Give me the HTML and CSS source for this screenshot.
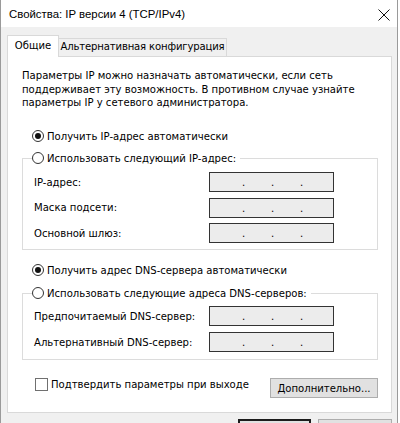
FILE: index.html
```html
<!DOCTYPE html>
<html lang="ru">
<head>
    <meta charset="UTF-8">
    <title>Свойства: IP версии 4 (TCP/IPv4)</title>
    <link rel="stylesheet" href="styles.css">
</head>
<body>
    <div class="window">
        <div class="titlebar">
            <span class="title">Свойства: IP версии 4 (TCP/IPv4)</span>
            <svg class="close" width="12" height="12" viewBox="0 0 12 12">
                <path d="M0.5 0.5 L11.5 11.5 M11.5 0.5 L0.5 11.5" stroke="#111" stroke-width="1" fill="none"/>
            </svg>
        </div>
        <div class="dialog">
            <div class="tabs">
                <div class="tab active">Общие</div>
                <div class="tab">Альтернативная конфигурация</div>
            </div>
            <div class="panel">
                <p class="intro">Параметры IP можно назначать автоматически, если сеть<br>поддерживает эту возможность. В противном случае узнайте<br>параметры IP у сетевого администратора.</p>

                <label class="radio-row first"><span class="radio checked"></span>Получить IP-адрес автоматически</label>

                <fieldset class="group ip-group">
                    <legend><label class="radio-row"><span class="radio"></span>Использовать следующий IP-адрес:</label></legend>
                    <div class="rows">
                        <div class="field-row"><span>IP-адрес:</span><div class="ip"><i>.</i><i>.</i><i>.</i></div></div>
                        <div class="field-row"><span>Маска подсети:</span><div class="ip"><i>.</i><i>.</i><i>.</i></div></div>
                        <div class="field-row"><span>Основной шлюз:</span><div class="ip"><i>.</i><i>.</i><i>.</i></div></div>
                    </div>
                </fieldset>

                <label class="radio-row dns-auto"><span class="radio checked"></span>Получить адрес DNS-сервера автоматически</label>

                <fieldset class="group dns-group">
                    <legend><label class="radio-row"><span class="radio"></span>Использовать следующие адреса DNS-серверов:</label></legend>
                    <div class="rows">
                        <div class="field-row"><span>Предпочитаемый DNS-сервер:</span><div class="ip"><i>.</i><i>.</i><i>.</i></div></div>
                        <div class="field-row"><span>Альтернативный DNS-сервер:</span><div class="ip"><i>.</i><i>.</i><i>.</i></div></div>
                    </div>
                </fieldset>

                <div class="footer-row">
                    <label class="check-row"><span class="checkbox"></span>Подтвердить параметры при выходе</label>
                    <button class="btn advanced">Дополнительно...</button>
                </div>
            </div>
            <!-- OK / Cancel are cut off by the bottom of the shot -->
            <div class="dialog-buttons">
                <button class="btn default" aria-label="OK"></button>
                <button class="btn" aria-label="Отмена"></button>
            </div>
        </div>
    </div>
</body>
</html>
```

FILE: styles.css
```css
body {
    margin: 0;
    background-color: #fff;
    font-family: "DejaVu Sans Condensed", "DejaVu Sans", sans-serif;
    font-size: 11.2px;
    color: #000;
}
.window {
    width: 398px;
    height: 423px;
    box-sizing: border-box;
    border-left: 1px solid #9a9a9a;
    border-right: 1px solid #9a9a9a;
    overflow: hidden;
    background-color: #f0f0f0;
}
.titlebar {
    height: 27px;
    background-color: #fff;
    display: flex;
    align-items: center;
    justify-content: space-between;
    padding: 0 7px 0 8px;
}
.title {
    font-family: "Liberation Sans", Arial, sans-serif;
    font-size: 11.4px;
    margin-top: 1px;
}
.close {
    margin-top: 2px;
}
.tabs {
    display: flex;
    align-items: flex-end;
    height: 21px;
    padding: 8px 0 0 6px;
}
.tab {
    box-sizing: border-box;
    width: 169px;
    height: 18px;
    line-height: 16px;
    text-align: center;
    white-space: nowrap;
    letter-spacing: -0.15px;
    border: 1px solid #d9d9d9;
    border-bottom: none;
    background-color: #f0f0f0;
}
.tab.active {
    width: 52px;
    height: 22px;
    line-height: 19px;
    letter-spacing: 0;
    margin-bottom: -1px;
    margin-right: -1px;
    background-color: #fff;
    position: relative;
    z-index: 1;
}
.panel {
    width: 385px;
    box-sizing: border-box;
    margin-left: 6px;
    border: 1px solid #d9d9d9;
    background-color: #fff;
    padding: 12px 13px 14px 14px;
}
.intro {
    margin: 0;
    line-height: 13.5px;
}
.radio-row {
    display: flex;
    align-items: center;
    height: 16px;
    white-space: nowrap;
}
.radio-row.first {
    margin-top: 18.5px;
    padding-left: 10px;
}
.radio-row.dns-auto {
    margin-top: 12px;
    padding-left: 10px;
}
.radio {
    box-sizing: border-box;
    width: 12px;
    height: 12px;
    margin-right: 3px;
    border: 1px solid #333;
    border-radius: 50%;
    background-color: #fff;
    display: inline-flex;
    align-items: center;
    justify-content: center;
}
.radio.checked::after {
    content: "";
    width: 6px;
    height: 6px;
    border-radius: 50%;
    background-color: #111;
}
.group {
    margin: 0;
    padding: 0;
    border: 1px solid #dcdcdc;
}
.group legend {
    margin-left: 9px;
    padding: 0 4px 0 0;
}
.ip-group {
    margin-top: 6px;
}
.dns-group {
    margin-top: 7px;
}
.rows {
    display: flex;
    flex-direction: column;
    padding-left: 11px;
}
.ip-group .rows {
    gap: 5.5px;
    padding-top: 6px;
    padding-bottom: 6px;
}
.dns-group .rows {
    gap: 6px;
    padding-top: 5px;
    padding-bottom: 7px;
}
.field-row {
    display: grid;
    grid-template-columns: 175px 125px;
    align-items: center;
    height: 20px;
}
.ip {
    box-sizing: border-box;
    height: 20px;
    border: 1px solid #333;
    background-color: #ececec;
    display: flex;
    align-items: flex-end;
    gap: 26px;
    padding: 0 0 3px 32px;
    line-height: 10px;
}
.ip i {
    font-style: normal;
    width: 3px;
}
.footer-row {
    display: flex;
    align-items: flex-start;
    justify-content: space-between;
    margin-top: 18px;
}
.check-row {
    display: flex;
    align-items: center;
    height: 13px;
    padding-left: 13px;
}
.checkbox {
    box-sizing: border-box;
    width: 13px;
    height: 13px;
    border: 1px solid #707070;
    background-color: #fff;
    margin-right: 3px;
}
.btn {
    box-sizing: border-box;
    font-family: inherit;
    font-size: 11.2px;
    border: 1px solid #adadad;
    background-color: #e1e1e1;
    padding: 0;
    color: #000;
}
.advanced {
    width: 108px;
    height: 20px;
}
.dialog-buttons {
    display: flex;
    justify-content: flex-end;
    gap: 7px;
    margin-top: 6px;
    padding-right: 5px;
}
.dialog-buttons .btn {
    width: 74px;
    height: 23px;
}
.dialog-buttons .default {
    width: 73px;
    border: 2px solid #1c1c1c;
}
```
